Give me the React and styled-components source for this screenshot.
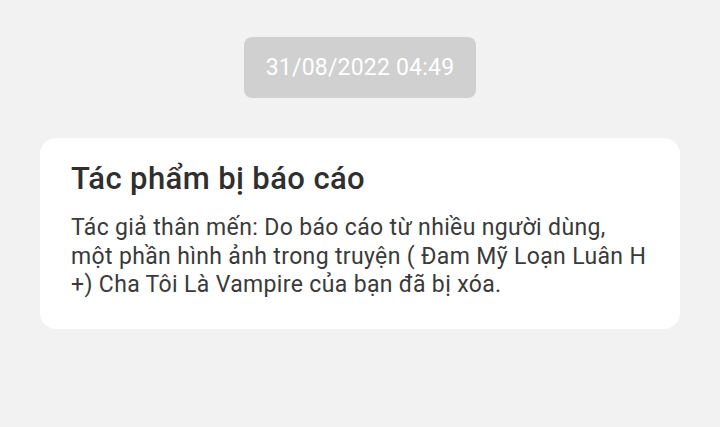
import React from "react";
import styled, { createGlobalStyle } from "styled-components";

const Global = createGlobalStyle`
  html, body { margin: 0; padding: 0; background: #f2f2f2; }
  body { font-family: Roboto, "Noto Sans", sans-serif; }
`;

const Page = styled.div`
  width: 720px;
  height: 427px;
  box-sizing: border-box;
  padding: 37px 40px 0;
  display: flex;
  flex-direction: column;
  align-items: center;
  background: #f2f2f2;
`;

const Stamp = styled.div`
  height: 61px;
  padding: 0 22px;
  box-sizing: border-box;
  display: flex;
  align-items: center;
  background: #d0d0d0;
  border-radius: 8px;
  color: #ffffff;
  font-size: 23px;
  letter-spacing: 0.2px;
`;

const Card = styled.div`
  margin-top: 40px;
  align-self: stretch;
  background: #ffffff;
  border-radius: 16px;
  padding: 24px 20px 29px 31px;
  display: flex;
  flex-direction: column;
  gap: 18px;
`;

const Title = styled.div`
  font-size: 31px;
  font-weight: 500;
  color: #2f2f2f;
  line-height: 34px;
  letter-spacing: 0.4px;
`;

const Body = styled.div`
  font-size: 23px;
  color: #3a3a3a;
  line-height: 28.5px;
  letter-spacing: 0.35px;
  white-space: nowrap;
`;

export default function App() {
  return (
    <>
      <Global />
      <Page>
        <Stamp>31/08/2022 04:49</Stamp>
        <Card>
          <Title>Tác phẩm bị báo cáo</Title>
          <Body>
            Tác giả thân mến: Do báo cáo từ nhiều người dùng,
            <br />
            một phần hình ảnh trong truyện ( Đam Mỹ Loạn Luân H
            <br />
            +) Cha Tôi Là Vampire của bạn đã bị xóa.
          </Body>
        </Card>
      </Page>
    </>
  );
}
